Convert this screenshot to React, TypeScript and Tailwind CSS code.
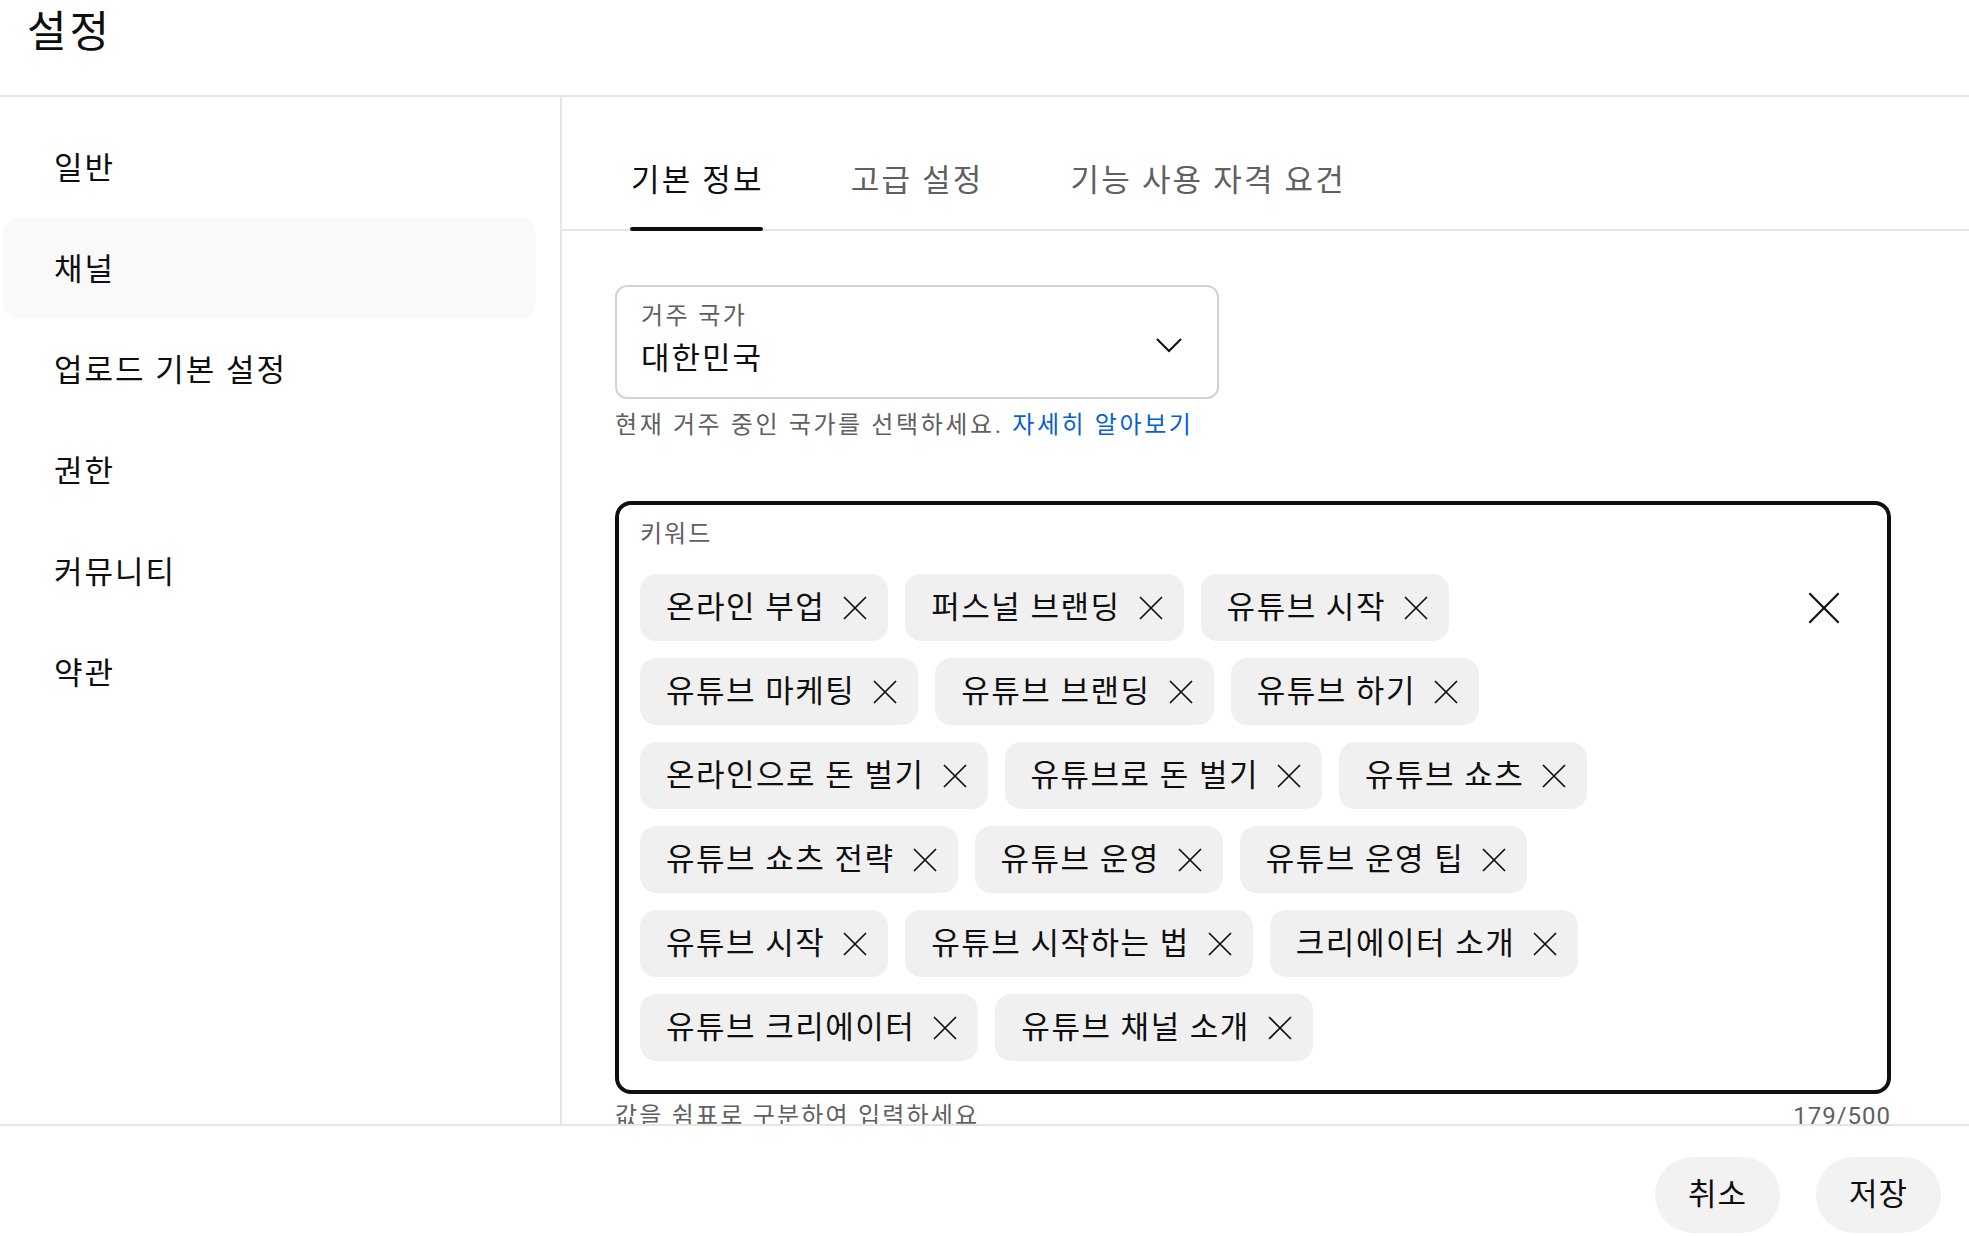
import React from 'react';

const menuItems = ['일반', '채널', '업로드 기본 설정', '권한', '커뮤니티', '약관'];
const tabs = ['기본 정보', '고급 설정', '기능 사용 자격 요건'];
const keywords = [
  '온라인 부업', '퍼스널 브랜딩', '유튜브 시작',
  '유튜브 마케팅', '유튜브 브랜딩', '유튜브 하기',
  '온라인으로 돈 벌기', '유튜브로 돈 벌기', '유튜브 쇼츠',
  '유튜브 쇼츠 전략', '유튜브 운영', '유튜브 운영 팁',
  '유튜브 시작', '유튜브 시작하는 법', '크리에이터 소개',
  '유튜브 크리에이터', '유튜브 채널 소개',
];

function CloseIcon({ size, stroke = 2 }: { size: number; stroke?: number }) {
  return (
    <svg width={size} height={size} viewBox="0 0 24 24" fill="none" stroke="#0f0f0f" strokeWidth={stroke}>
      <path d="M1 1 L23 23 M23 1 L1 23" />
    </svg>
  );
}

function Chip({ label }: { label: string }) {
  return (
    <div className="h-[67px] flex items-center pl-[26px] pr-[21px] gap-[18px] rounded-[16px] bg-[#f0f0f0] text-[31px] tracking-[1.5px] text-[#0f0f0f]">
      <span className="leading-none">{label}</span>
      <CloseIcon size={24} stroke={1.7} />
    </div>
  );
}

export default function App() {
  const active = 1;
  return (
    <div className="w-full h-[1236px] flex flex-col bg-white overflow-hidden font-['Roboto','Noto_Sans_CJK_KR',sans-serif] text-[#0f0f0f]">
      <header className="h-[97px] shrink-0 border-b-2 border-[#e5e5e5] pl-[27px] pt-[3px]">
        <h1 className="text-[43px] tracking-[3px] leading-[58px]">설정</h1>
      </header>

      <div className="flex-1 min-h-0 flex">
        <nav className="w-[562px] shrink-0 border-r-2 border-[#e5e5e5] pt-[20px] pl-[3px] pr-[24px]">
          {menuItems.map((item, i) => (
            <div
              key={item}
              className={`h-[101px] flex items-center pl-[51px] pt-[3px] rounded-[16px] text-[31px] tracking-[2px] ${i === active ? 'bg-[#f9f9f9]' : ''}`}
            >
              {item}
            </div>
          ))}
        </nav>

        <main className="flex-1 min-w-0 flex flex-col overflow-hidden">
          <div className="h-[134px] shrink-0 border-b-2 border-[#e5e5e5] flex pl-[69px] gap-[87px]">
            {tabs.map((tab, i) => (
              <div key={tab} className={`relative h-full flex items-center pt-[36px] text-[31px] tracking-[2.2px] ${i === 0 ? 'text-[#0f0f0f]' : 'text-[#606060]'}`}>
                {tab}
                {i === 0 && <div className="absolute left-[-1px] right-[1px] bottom-[-2px] h-[4px] rounded-full bg-[#0f0f0f]" />}
              </div>
            ))}
          </div>

          <div className="pl-[53px] pt-[54px]">
            <div className="w-[604px] h-[114px] border-2 border-[#d3d3d3] rounded-[12px] px-[24px] pt-[13px] flex items-start justify-between">
              <div className="flex flex-col">
                <span className="text-[24px] tracking-[2.4px] leading-[32px] text-[#606060]">거주 국가</span>
                <span className="text-[31px] tracking-[2px] leading-[38px] mt-[8px]">대한민국</span>
              </div>
              <svg width="28" height="18" viewBox="0 0 28 18" fill="none" stroke="#0f0f0f" strokeWidth="2" className="mt-[36px] mr-[10px]">
                <path d="M2 3 L14 15 L26 3" />
              </svg>
            </div>
            <p className="mt-[10px] text-[24px] tracking-[2.6px] leading-[32px] text-[#606060]">
              현재 거주 중인 국가를 선택하세요. <span className="text-[#065fd4]">자세히 알아보기</span>
            </p>

            <div className="mt-[60px] w-[1276px] border-4 border-[#0f0f0f] rounded-[16px] pl-[21px] pr-[47px] pt-[13px] pb-[29px]">
              <div className="text-[24px] tracking-[2px] leading-[32px] text-[#606060]">키워드</div>
              <div className="mt-[24px] flex items-start">
                <div className="w-[1000px] flex flex-wrap gap-x-[17px] gap-y-[17px]">
                  {keywords.map((k, i) => (
                    <Chip key={i} label={k} />
                  ))}
                </div>
                <div className="ml-auto h-[67px] flex items-center">
                  <CloseIcon size={32} stroke={1.6} />
                </div>
              </div>
            </div>
            <div className="w-[1276px] mt-[6px] flex justify-between text-[24px] leading-[32px] text-[#606060]">
              <span className="tracking-[2.2px]">값을 쉼표로 구분하여 입력하세요</span>
              <span className="tracking-[1px]">179/500</span>
            </div>
          </div>
        </main>
      </div>

      <footer className="h-[112px] shrink-0 border-t-2 border-[#e5e5e5] flex items-start justify-end gap-[36px] pr-[28px] pt-[31px]">
        <button className="w-[125px] h-[76px] rounded-full bg-[#f2f2f2] text-[31px] tracking-[1px]">취소</button>
        <button className="w-[125px] h-[76px] rounded-full bg-[#f2f2f2] text-[31px] tracking-[1px]">저장</button>
      </footer>
    </div>
  );
}
